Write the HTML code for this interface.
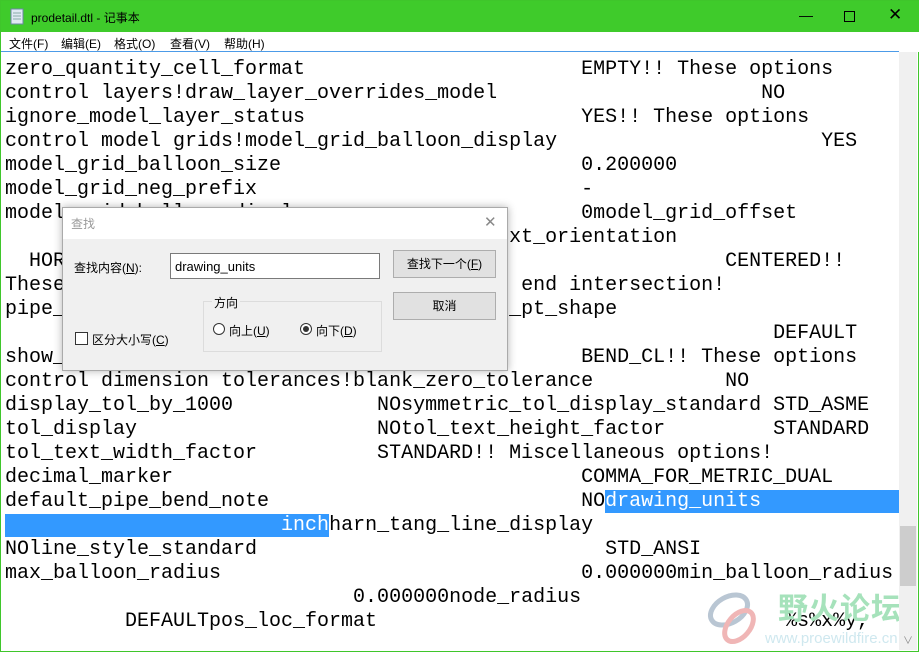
<!DOCTYPE html>
<html><head><meta charset="utf-8"><style>
*{margin:0;padding:0;box-sizing:border-box}
body{width:919px;height:652px;overflow:hidden;background:#fff;position:relative;font-family:"Liberation Sans","Noto Sans CJK SC",sans-serif}
.win{position:absolute;left:0;top:0;width:919px;height:652px;border:1px solid #3fc62b}
.title{position:absolute;left:0;top:0;width:919px;height:31px;background:#3fcb2b;font-size:12px;color:#000}
.title .t{position:absolute;left:30px;top:8px}
.ctl{position:absolute;top:6px;font-size:14px}
.menu{position:absolute;left:1px;top:31px;width:917px;height:20px;background:#fff;font-size:12px}
.menu span{position:absolute;top:3px}
.edit{position:absolute;left:1px;top:51px;width:898px;height:600px;border-top:1px solid #4c9be8;overflow:hidden}
.ln{position:absolute;left:4px;white-space:pre;font-family:"Liberation Mono",monospace;font-size:20px;line-height:24px;color:#000}
.sel{background:#3399ff;color:#fff}
.sb{position:absolute;left:899px;top:52px;width:18px;height:598px;background:#f0f0f0}
.dlg{position:absolute;left:62px;top:207px;width:446px;height:164px;background:#f0f0f0;border:1px solid #aaa;box-shadow:0 0 8px rgba(0,0,0,.3);font-size:12px}
.dlg .tb{position:absolute;left:0;top:0;width:444px;height:31px;background:#fff;color:#999}
.btn{position:absolute;width:103px;height:28px;border:1px solid #adadad;background:#e1e1e1;text-align:center;line-height:26px}
</style></head><body>
<div class="win">
<div class="title"><svg style="position:absolute;left:9px;top:7px" width="14" height="17"><rect x="1" y="1" width="12" height="15" fill="#dfe9f3" stroke="#6b87a6"/><path d="M3 5h8M3 8h8M3 11h8" stroke="#8aa"/></svg><span class="t">prodetail.dtl - 记事本</span>
<span class="ctl" style="left:798px">&#8212;</span><svg class="ctl" style="left:843px;top:10px" width="11" height="11"><rect x=".5" y=".5" width="10" height="10" fill="none" stroke="#000"/></svg><span class="ctl" style="left:887px;font-size:17px;top:4px">✕</span></div>
<div class="menu"><span style="left:7px">文件(F)</span><span style="left:59px">编辑(E)</span><span style="left:112px">格式(O)</span><span style="left:168px">查看(V)</span><span style="left:222px">帮助(H)</span></div>
</div>
<div class="edit">
<div class="ln" style="top:6px">zero_quantity_cell_format                       EMPTY!! These options</div>
<div class="ln" style="top:30px">control layers!draw_layer_overrides_model                      NO</div>
<div class="ln" style="top:54px">ignore_model_layer_status                       YES!! These options</div>
<div class="ln" style="top:78px">control model grids!model_grid_balloon_display                      YES</div>
<div class="ln" style="top:102px">model_grid_balloon_size                         0.200000</div>
<div class="ln" style="top:126px">model_grid_neg_prefix                           -</div>
<div class="ln" style="top:150px">model_grid_balloon_display                      0model_grid_offset</div>
<div class="ln" style="top:174px">                                         ext_orientation</div>
<div class="ln" style="top:198px">  HORIZONTAL                                                CENTERED!!</div>
<div class="ln" style="top:222px">These                                      end intersection!</div>
<div class="ln" style="top:246px">pipe_                                     _pt_shape</div>
<div class="ln" style="top:270px">                                                                DEFAULT</div>
<div class="ln" style="top:294px">show_pipe_bend_centerline                       BEND_CL!! These options</div>
<div class="ln" style="top:318px">control dimension tolerances!blank_zero_tolerance           NO</div>
<div class="ln" style="top:342px">display_tol_by_1000            NOsymmetric_tol_display_standard STD_ASME</div>
<div class="ln" style="top:366px">tol_display                    NOtol_text_height_factor         STANDARD</div>
<div class="ln" style="top:390px">tol_text_width_factor          STANDARD!! Miscellaneous options!</div>
<div class="ln" style="top:414px">decimal_marker                                  COMMA_FOR_METRIC_DUAL</div>
<div class="ln" style="top:438px">default_pipe_bend_note                          NO<span class="sel">drawing_units                           </span></div>
<div class="ln" style="top:462px"><span class="sel">                       inch</span>harn_tang_line_display</div>
<div class="ln" style="top:486px">NOline_style_standard                             STD_ANSI</div>
<div class="ln" style="top:510px">max_balloon_radius                              0.000000min_balloon_radius</div>
<div class="ln" style="top:534px">                             0.000000node_radius</div>
<div class="ln" style="top:558px">          DEFAULTpos_loc_format                                  %s%x%y,</div>
</div>
<svg style="position:absolute;left:704px;top:588px" width="60" height="58"><ellipse cx="25" cy="22" rx="20" ry="13" fill="none" stroke="#b9c6d3" stroke-width="5" transform="rotate(-30 25 22)"/><ellipse cx="35" cy="38" rx="18" ry="11" fill="none" stroke="#f0b6b6" stroke-width="5" transform="rotate(-50 35 38)"/></svg>
<div style="position:absolute;left:778px;top:584px;font-size:30px;font-weight:bold;color:#a6e2bb;letter-spacing:1px">野火论坛</div>
<div style="position:absolute;left:765px;top:630px;font-size:15px;color:#cfe8ef">www.proewildfire.cn</div>
<div class="sb"><div style="position:absolute;left:1px;top:474px;width:16px;height:60px;background:#cdcdcd"></div><span style="position:absolute;left:4px;top:580px;font-size:10px;color:#888">&#8744;</span></div>
<div class="dlg">
<div class="tb"><span style="position:absolute;left:8px;top:7px">查找</span><span style="position:absolute;left:421px;top:5px;font-size:15px;color:#888">✕</span></div>
<span style="position:absolute;left:11px;top:51px">查找内容(<u>N</u>):</span>
<div style="position:absolute;left:107px;top:45px;width:210px;height:26px;background:#fff;border:1px solid #7a7a7a;padding:5px 4px;font-size:13px">drawing_units</div>
<div class="btn" style="left:330px;top:42px">查找下一个(<u>F</u>)</div>
<div class="btn" style="left:330px;top:84px">取消</div>
<div style="position:absolute;left:140px;top:93px;width:179px;height:51px;border:1px solid #dcdcdc"></div>
<span style="position:absolute;left:149px;top:86px;background:#f0f0f0;padding:0 2px">方向</span>
<span style="position:absolute;left:150px;top:115px;width:12px;height:12px;border:1px solid #333;border-radius:50%;background:#fff"></span><span style="position:absolute;left:166px;top:114px">向上(<u>U</u>)</span>
<span style="position:absolute;left:237px;top:115px;width:12px;height:12px;border:1px solid #333;border-radius:50%;background:#fff"><span style="position:absolute;left:2px;top:2px;width:6px;height:6px;border-radius:50%;background:#333"></span></span><span style="position:absolute;left:253px;top:114px">向下(<u>D</u>)</span>
<span style="position:absolute;left:12px;top:124px;width:13px;height:13px;border:1px solid #333;background:#fff"></span><span style="position:absolute;left:29px;top:123px">区分大小写(<u>C</u>)</span>
</div>
</body></html>
